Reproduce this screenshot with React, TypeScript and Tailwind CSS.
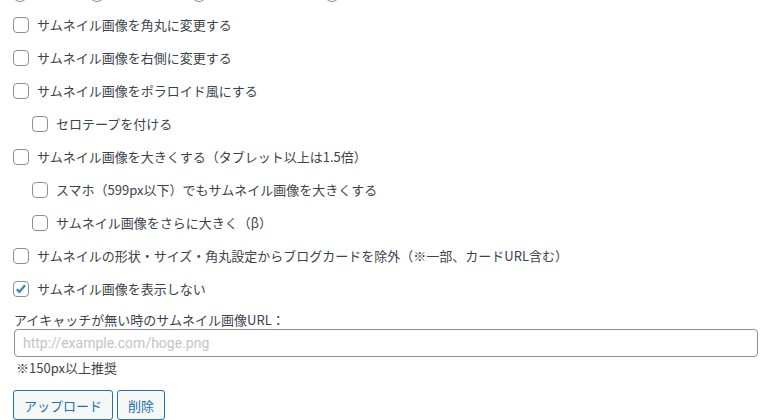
import React from 'react'

type Opt = { label: string; indent?: boolean; checked?: boolean }

const options: Opt[] = [
  { label: 'サムネイル画像を角丸に変更する' },
  { label: 'サムネイル画像を右側に変更する' },
  { label: 'サムネイル画像をポラロイド風にする' },
  { label: 'セロテープを付ける', indent: true },
  { label: 'サムネイル画像を大きくする（タブレット以上は1.5倍）' },
  { label: 'スマホ（599px以下）でもサムネイル画像を大きくする', indent: true },
  { label: 'サムネイル画像をさらに大きく（β）', indent: true },
  { label: 'サムネイルの形状・サイズ・角丸設定からブログカードを除外（※一部、カードURL含む）' },
  { label: 'サムネイル画像を表示しない', checked: true },
]

function Checkbox({ checked }: { checked?: boolean }) {
  return (
    <span className="w-4 h-4 shrink-0 border border-[#8c8f94] rounded-[4px] bg-white flex items-center justify-center">
      {checked && (
        <svg viewBox="0 0 16 16" className="w-[14px] h-[14px]">
          <path d="M3.2 8.2l3 3.1 6.4-7.6" fill="none" stroke="#3582c4" strokeWidth="2.6" strokeLinejoin="round" />
        </svg>
      )}
    </span>
  )
}

function Radio({ className }: { className: string }) {
  return <span className={`w-4 h-4 shrink-0 rounded-full border border-[#8c8f94] bg-white ${className}`} />
}

export default function App() {
  return (
    <div className="w-[769px] h-[420px] overflow-hidden bg-white text-[13px] text-[#3c434a] font-['Noto_Sans_CJK_JP','Noto_Sans',sans-serif]">
      <div className="flex -mt-[14px] h-4">
        <Radio className="ml-[12px]" />
        <Radio className="ml-[61px]" />
        <Radio className="ml-[86px]" />
        <Radio className="ml-[117px]" />
      </div>

      <div className="pt-[6px]">
        {options.map(o => (
          <div key={o.label} className={`h-[33px] flex items-center ${o.indent ? 'pl-[32px]' : 'pl-[13px]'}`}>
            <Checkbox checked={o.checked} />
            <span className="ml-[8px] leading-none whitespace-nowrap">{o.label}</span>
          </div>
        ))}
      </div>

      <div className="px-[14px] pt-[8px]">
        <div className="leading-[14px]">アイキャッチが無い時のサムネイル画像URL：</div>
        <input
          className="block mt-[2px] w-[744px] h-[28px] border border-[#8c8f94] rounded-[4px] px-2 text-[14px] font-['Roboto','Liberation_Sans',sans-serif] placeholder:text-[#c3c4c7] outline-none"
          placeholder="http://example.com/hoge.png"
        />
        <div className="mt-[2px] leading-[18px] pl-[2px]">※150px以上推奨</div>
        <div className="flex gap-[4px] mt-[13px] -ml-[1px]">
          <button className="h-[30px] px-[10px] border border-[#2271b1] rounded-[3px] bg-[#f6f7f7] text-[#2271b1] leading-none">アップロード</button>
          <button className="h-[30px] px-[10px] border border-[#2271b1] rounded-[3px] bg-[#f6f7f7] text-[#2271b1] leading-none">削除</button>
        </div>
      </div>
    </div>
  )
}
